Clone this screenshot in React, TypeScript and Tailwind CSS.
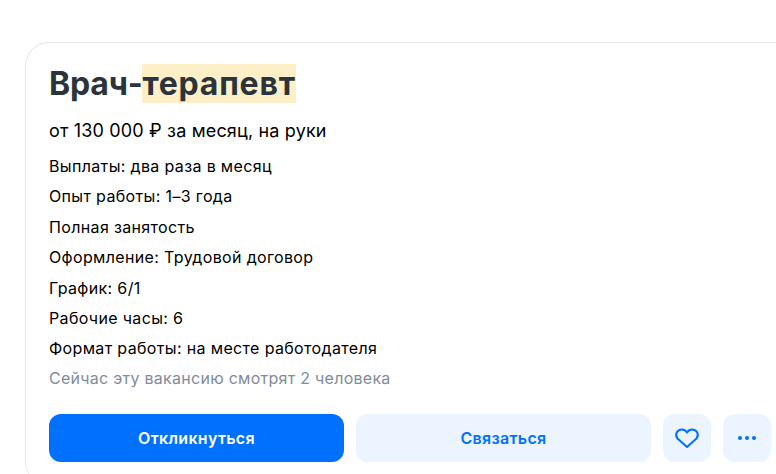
import React from 'react';

const rows = [
  'Выплаты: два раза в месяц',
  'Опыт работы: 1–3 года',
  'Полная занятость',
  'Оформление: Трудовой договор',
  'График: 6/1',
  'Рабочие часы: 6',
  'Формат работы: на месте работодателя',
];

export default function App() {
  return (
    <div className="h-[474px] w-[776px] overflow-hidden bg-white pl-[25px] pt-[42px] font-['Inter',sans-serif]">
      <div className="h-[444px] w-[800px] rounded-l-[24px] border border-[#e2e6ee] pl-[23px] pt-[21px]">
        <h1 className="text-[32px] leading-[39px] font-bold tracking-[-0.2px] text-[#2b343b]">
          Врач-<span className="bg-[#fdf0c8] tracking-[0.77px]">терапевт</span>
        </h1>
        <p className="mt-[16px] text-[18px] leading-[24px] tracking-[0.17px] text-black">от 130 000 ₽ за месяц, на руки</p>
        <div className="mt-[11px] text-[16px] tracking-[0.35px] text-black">
          {rows.map((row) => (
            <p key={row} className="h-[30.4px] leading-[24px]">{row}</p>
          ))}
        </div>
        <p className="mt-[-1px] text-[16px] leading-[24px] tracking-[0.27px] text-[#7f8c99]">Сейчас эту вакансию смотрят 2 человека</p>
        <div className="mt-[24px] flex gap-3">
          <button className="h-12 w-[295px] rounded-xl bg-[#0070ff] text-[16px] font-semibold tracking-[0.3px] text-white">Откликнуться</button>
          <button className="h-12 w-[295px] rounded-xl bg-[#ebf4ff] text-[16px] font-semibold tracking-[0.3px] text-[#0070ff]">Связаться</button>
          <button className="flex h-12 w-12 items-center justify-center rounded-xl bg-[#ebf4ff]">
            <svg width="26" height="22" viewBox="0 0 26 22" fill="none" stroke="#0070ff" strokeWidth="2" strokeLinejoin="round">
              <path d="M13 20 3.500 11.500C0.500 8 3 2.500 7.800 2.500c2.300 0 4 1 5.200 3 1.200-2 2.900-3 5.200-3 4.800 0 7.300 5.500 4.300 9L13 20Z" />
            </svg>
          </button>
          <button className="flex h-12 w-12 items-center justify-center gap-[3px] rounded-xl bg-[#ebf4ff]">
            <span className="h-1 w-1 rounded-full bg-[#0070ff]" />
            <span className="h-1 w-1 rounded-full bg-[#0070ff]" />
            <span className="h-1 w-1 rounded-full bg-[#0070ff]" />
          </button>
        </div>
      </div>
    </div>
  );
}
